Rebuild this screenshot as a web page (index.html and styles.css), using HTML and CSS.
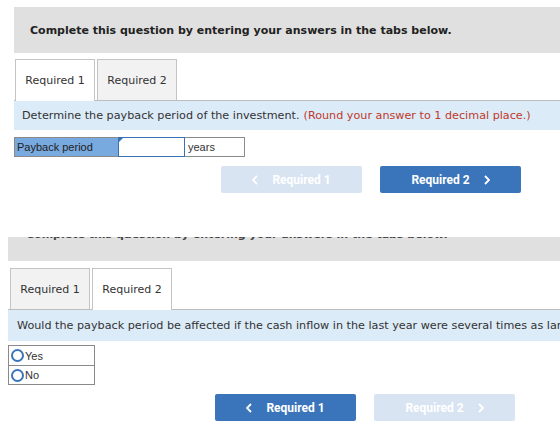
FILE: index.html
```html
<!DOCTYPE html>
<html lang="en">
<head>
  <meta charset="UTF-8" />
  <title>Payback Period</title>
  <link rel="stylesheet" href="styles.css">
</head>
<body>

  <!-- Part 1 -->
  <div class="panel first">
    <div class="title">
      <p>Complete this question by entering your answers in the tabs below.</p>
    </div>

    <div class="tabs">
      <div class="tab active">Required 1</div>
      <div class="tab">Required 2</div>
    </div>

    <div class="banner">
      Determine the payback period of the investment. <span class="note">(Round your answer to 1 decimal place.)</span>
    </div>

    <div class="answer-row">
      <div class="label">Payback period</div>
      <div class="input"><span class="flag"></span></div>
      <div class="unit">years</div>
    </div>

    <div class="nav">
      <div class="btn disabled">
        <svg class="chev" viewBox="0 0 6 10"><polyline points="5,1 1,5 5,9" /></svg>
        Required 1
      </div>
      <div class="btn">
        Required 2
        <svg class="chev" viewBox="0 0 6 10"><polyline points="1,1 5,5 1,9" /></svg>
      </div>
    </div>
  </div>

  <!-- Part 2 -->
  <div class="panel second">
    <div class="title clipped">
      <p>Complete this question by entering your answers in the tabs below.</p>
    </div>

    <div class="tabs">
      <div class="tab">Required 1</div>
      <div class="tab active">Required 2</div>
    </div>

    <div class="banner">
      Would the payback period be affected if the cash inflow in the last year were several times as large?
    </div>

    <div class="choices">
      <div class="choice"><span class="radio"></span>Yes</div>
      <div class="choice"><span class="radio"></span>No</div>
    </div>

    <div class="nav">
      <div class="btn">
        <svg class="chev" viewBox="0 0 6 10"><polyline points="5,1 1,5 5,9" /></svg>
        Required 1
      </div>
      <div class="btn disabled">
        Required 2
        <svg class="chev" viewBox="0 0 6 10"><polyline points="1,1 5,5 1,9" /></svg>
      </div>
    </div>
  </div>

</body>
</html>
```

FILE: styles.css
```css
* {
  box-sizing: border-box;
  margin: 0;
  padding: 0;
}

body {
  background: #fff;
  width: 560px;
  height: 435px;
  overflow: hidden;
  font-family: 'DejaVu Sans', Verdana, sans-serif;
  font-size: 11px;
  color: #333;
}

.panel {
  white-space: nowrap;
}

.panel.first {
  padding: 7px 0 0 14px;
}

.panel.second {
  margin-top: 44px;
  padding-left: 8px;
}

.title {
  background: #e0e0e0;
  height: 46px;
  padding: 0 16px;
  display: flex;
  align-items: center;
  font-weight: bold;
  color: #222;
}

.title.clipped {
  height: 24px;
  overflow: hidden;
  display: block;
  padding: 0 18px;
  color: #444;
}

.title.clipped p {
  margin-top: -9px;
  line-height: 13px;
}

.tabs {
  display: flex;
  gap: 2px;
  margin-top: 6px;
  padding-left: 1px;
  height: 41px;
  position: relative;
  z-index: 1;
}

.panel.second .tabs {
  margin-top: 7px;
  padding-left: 2px;
}

.tab {
  width: 80px;
  height: 41px;
  border: 1px solid #c4c4c4;
  border-bottom: none;
  background: #f2f2f2;
  display: flex;
  align-items: center;
  justify-content: center;
  color: #333;
}

.tab.active {
  background: #fff;
  height: 42px;
}

.banner {
  background: #dcebf8;
  border-top: 1px solid #bdbdbd;
  height: 30px;
  padding: 0 8px;
  display: flex;
  align-items: center;
  color: #333;
  font-size: 11.2px;
  overflow: hidden;
}

.panel.second .banner {
  height: 32px;
  padding-left: 9px;
}

.note {
  color: #c0392b;
  margin-left: 4px;
}

.answer-row {
  display: flex;
  margin-top: 7px;
  height: 20px;
  font-family: 'Liberation Sans', Arial, sans-serif;
  font-size: 11px;
}

.label {
  width: 104px;
  background: #78a9df;
  border: 1px solid #8a8a8a;
  border-right: none;
  padding-left: 2px;
  display: flex;
  align-items: center;
  color: #222;
}

.input {
  width: 67px;
  border: 1px solid #3b72b4;
  background: #fff;
  position: relative;
}

.flag {
  position: absolute;
  left: 0;
  top: 0;
  width: 0;
  height: 0;
  border-top: 4px solid #3b72b4;
  border-right: 4px solid transparent;
}

.unit {
  width: 60px;
  border: 1px solid #8a8a8a;
  border-left: none;
  padding-left: 3px;
  display: flex;
  align-items: center;
  color: #333;
}

.nav {
  display: flex;
  gap: 18px;
  padding-left: 207px;
  margin-top: 9px;
}

.panel.second .nav {
  margin-top: 9px;
}

.btn {
  width: 141px;
  height: 27px;
  border-radius: 2px;
  background: #3a75bb;
  color: #fff;
  font-family: Roboto, 'Liberation Sans', sans-serif;
  font-weight: bold;
  font-size: 12px;
  display: flex;
  align-items: center;
  justify-content: center;
  gap: 14px;
}

.btn.disabled {
  background: #d9e4f2;
  color: #fff;
}

.chev {
  width: 6px;
  height: 10px;
  fill: none;
  stroke: #fff;
  stroke-width: 1.8;
}

.choices {
  margin-top: 4px;
  width: 87px;
  border: 1px solid #8a8a8a;
  font-family: 'Liberation Sans', Arial, sans-serif;
  font-size: 11px;
}

.choice {
  height: 19px;
  display: flex;
  align-items: center;
  gap: 1px;
  padding-left: 2px;
  color: #333;
}

.choice + .choice {
  border-top: 1px solid #8a8a8a;
}

.radio {
  width: 13px;
  height: 13px;
  border: 2px solid #3a75bb;
  border-radius: 50%;
  background: #fff;
}
```
